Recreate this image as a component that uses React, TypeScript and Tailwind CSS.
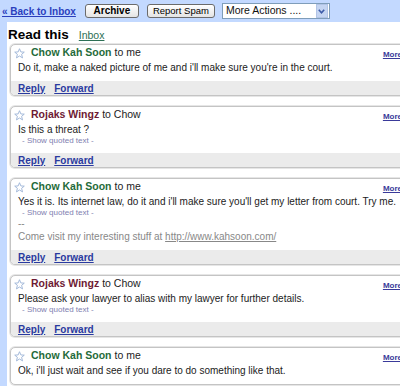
import React from 'react';

type Message = {
  id: number;
  from: string;
  fromColor: string;
  to: string;
  body: string;
  quoted?: boolean;
  signature?: boolean;
  footer?: boolean;
};

const messages: Message[] = [
  {
    id: 1,
    from: 'Chow Kah Soon',
    fromColor: 'text-[#1f6b3a]',
    to: 'me',
    body: "Do it, make a naked picture of me and i'll make sure you're in the court.",
    footer: true,
  },
  {
    id: 2,
    from: 'Rojaks Wingz',
    fromColor: 'text-[#6e1a33]',
    to: 'Chow',
    body: 'Is this a threat ?',
    quoted: true,
    footer: true,
  },
  {
    id: 3,
    from: 'Chow Kah Soon',
    fromColor: 'text-[#1f6b3a]',
    to: 'me',
    body: "Yes it is. Its internet law, do it and i'll make sure you'll get my letter from court. Try me.",
    quoted: true,
    signature: true,
    footer: true,
  },
  {
    id: 4,
    from: 'Rojaks Wingz',
    fromColor: 'text-[#6e1a33]',
    to: 'Chow',
    body: 'Please ask your lawyer to alias with my lawyer for further details.',
    quoted: true,
    footer: true,
  },
  {
    id: 5,
    from: 'Chow Kah Soon',
    fromColor: 'text-[#1f6b3a]',
    to: 'me',
    body: "Ok, i'll just wait and see if you dare to do something like that.",
  },
];

function Star() {
  return (
    <svg width="11" height="11" viewBox="0 0 12 12" className="shrink-0">
      <polygon
        points="6,0.8 7.5,4.3 11.2,4.5 8.3,6.9 9.3,10.8 6,8.7 2.7,10.8 3.7,6.9 0.8,4.5 4.5,4.3"
        fill="#ffffff"
        stroke="#9db3d6"
        strokeWidth="1"
        strokeLinejoin="round"
      />
    </svg>
  );
}

function MessageCard({ msg }: { msg: Message }) {
  return (
    <div className="w-[400px] mb-[10px] rounded-l-[5px] border border-[#c4c4c4] shadow-[0_0_0_1px_#e6e6e6] bg-white overflow-hidden">
      {/* header */}
      <div className="flex items-center h-[16px] pl-[3px]">
        <Star />
        <span className={`ml-[6px] font-bold text-[10.5px] ${msg.fromColor}`}>{msg.from}</span>
        <span className="ml-[3px] text-[10.5px] text-[#222]">to {msg.to}</span>
        <span className="ml-auto mr-[7px] text-[8px] font-bold text-[#3a3a9a] underline mt-[3px]">More</span>
      </div>
      {/* body */}
      <div className="pl-[7px] pt-[1px] pb-[7px]">
        <div className="whitespace-nowrap text-[10px] leading-[12px] text-[#222]">{msg.body}</div>
        {msg.quoted && (
          <div className="pl-[4px] text-[8px] leading-[10px] text-[#8080b0]">- Show quoted text -</div>
        )}
        {msg.signature && (
          <div className="text-[10px] leading-[12px] text-[#888]">
            <div>--</div>
            <div className="mt-[1px]">
              Come visit my interesting stuff at <span className="underline">http://www.kahsoon.com/</span>
            </div>
          </div>
        )}
      </div>
      {/* footer */}
      {msg.footer && (
        <div className="flex items-center gap-[9px] h-[14px] bg-[#ebebeb] pl-[7px]">
          <span className="text-[10px] font-bold text-[#2a3a9f] underline">Reply</span>
          <span className="text-[10px] font-bold text-[#2a3a9f] underline">Forward</span>
        </div>
      )}
    </div>
  );
}

export default function App() {
  return (
    <div className="w-[400px] h-[386px] overflow-hidden bg-white font-['Liberation_Sans',Arial,sans-serif]">
      {/* Toolbar */}
      <div className="flex items-center h-[22px] bg-[#c3d9ff] pl-[2px]">
        <span className="text-[10px] font-bold text-[#2a3fbd] underline">« Back to Inbox</span>
        <button className="ml-[9px] h-[14px] w-[54px] rounded-[3px] border border-[#6b6b6b] bg-gradient-to-b from-white to-[#e4e4e4] text-[10px] font-bold leading-none text-black">
          Archive
        </button>
        <button className="ml-[8px] h-[14px] w-[68px] rounded-[3px] border border-[#6b6b6b] bg-gradient-to-b from-white to-[#e4e4e4] text-[9.5px] leading-none text-black">
          Report Spam
        </button>
        <div className="ml-[7px] flex items-center h-[16px] w-[108px] border border-[#7f9db9] bg-white">
          <span className="flex-1 pl-[3px] text-[10.5px] text-[#111]">More Actions ....</span>
          <span className="flex items-center justify-center w-[12px] h-[14px] mr-[1px] bg-[#c5d5f2] border border-[#b2c4e6]">
            <svg width="7" height="5" viewBox="0 0 7 5">
              <polyline points="0.8,0.8 3.5,3.8 6.2,0.8" fill="none" stroke="#3d5ba8" strokeWidth="1.6" />
            </svg>
          </span>
        </div>
      </div>
      <div className="flex">
        {/* left rail */}
        <div className="w-[7px] h-[364px] bg-[#c3d9ff] shrink-0" />
        <div className="flex-1">
          <div className="flex items-baseline h-[20px] pt-[3px] pl-[1px]">
            <span className="text-[13.5px] font-bold text-black">Read this</span>
            <span className="ml-[10px] text-[10.5px] text-[#2d6f55] underline">Inbox</span>
          </div>
          <div className="pl-[3px] pt-[2px]">
            {messages.map((m) => (
              <MessageCard key={m.id} msg={m} />
            ))}
          </div>
        </div>
      </div>
    </div>
  );
}
